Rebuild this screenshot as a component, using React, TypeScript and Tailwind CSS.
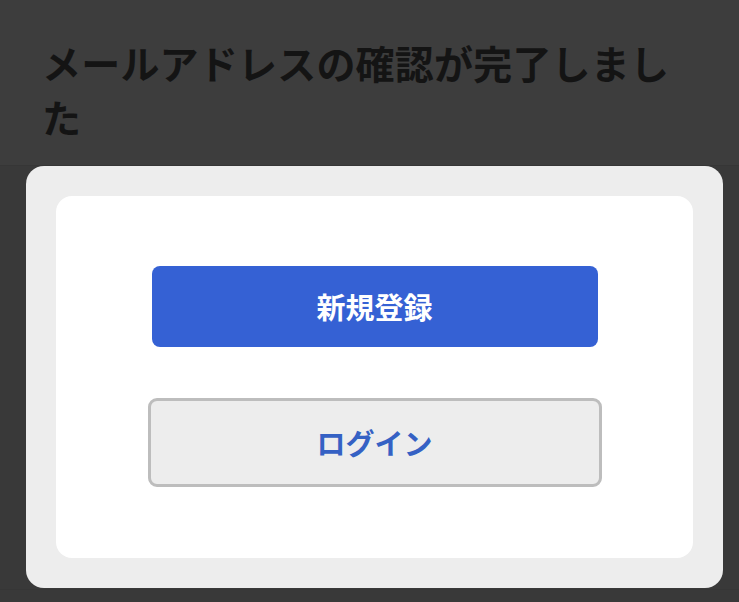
const App = () => {
    return (
        <div
            className="min-h-[602px] w-full bg-[#393939] flex flex-col"
            style={{ fontFamily: '"Noto Sans CJK JP", "Noto Sans", sans-serif' }}
        >
            <header className="bg-[#3d3d3d] border-b border-[#363636] pl-[42px] pr-[36px] pt-[35px] pb-[22px]">
                <h1 className="text-[39px] leading-[54px] font-bold text-[#141414] tracking-[0.2px]">
                    メールアドレスの確認が完了しました
                </h1>
            </header>

            <div className="pl-[26px] pr-[16px]">
                <div className="bg-[#ededed] rounded-[18px] p-[30px]">
                    <div className="bg-white rounded-[16px] pt-[70px] pb-[71px] flex flex-col items-center gap-[51px]">
                        <button className="w-[446px] h-[81px] rounded-[8px] bg-[#3561d4] text-white text-[29px] font-bold">
                            新規登録
                        </button>
                        <button className="w-[454px] h-[89px] rounded-[9px] border-[3px] border-[#bdbdbd] bg-[#ededed] text-[#3561c4] text-[29px] font-bold">
                            ログイン
                        </button>
                    </div>
                </div>
            </div>
            <div className="mt-px flex-1 border-t border-[#363636]" />
        </div>
    )
}

export default App
